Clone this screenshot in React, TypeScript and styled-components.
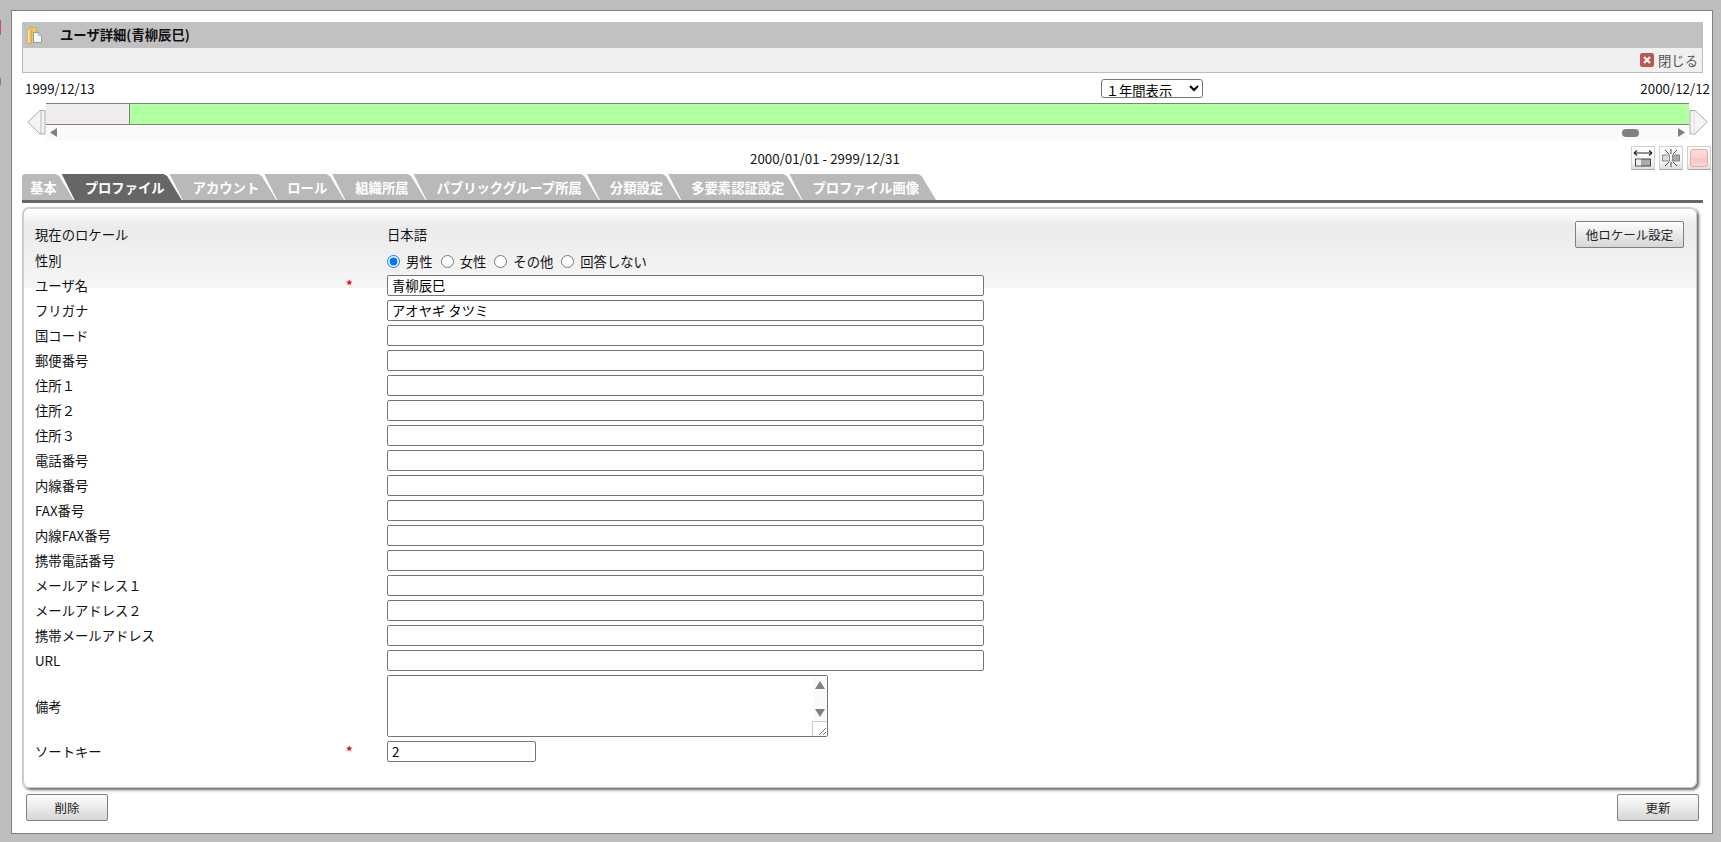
import React from "react";
import styled, { createGlobalStyle } from "styled-components";

const Global = createGlobalStyle`
  html, body { margin: 0; padding: 0; }
  body { font-family: "Noto Sans CJK JP", "Noto Sans", sans-serif; font-size: 13.33px; color: #111; }
  * { box-sizing: border-box; }
`;

const Page = styled.div`
  position: relative;
  width: 1721px;
  height: 842px;
  padding: 10px 8px 8px 11px;
  background: #bdbdbd;
  overflow: hidden;
`;
const EdgeMark = styled.div<{ $top: number; $h: number; $c: string }>`
  position: absolute;
  left: 0;
  top: ${(p) => p.$top}px;
  width: 1px;
  height: ${(p) => p.$h}px;
  background: ${(p) => p.$c};
`;
const Window = styled.div`
  height: 824px;
  padding: 11px 9px 0 10px;
  background: #fff;
  border: 1px solid #808080;
  display: flex;
  flex-direction: column;
`;
const TitleBar = styled.div`
  height: 26px;
  flex: none;
  display: flex;
  align-items: center;
  padding-left: 5px;
  background: #c1c1c1;
`;
const Title = styled.span`
  margin-left: 18px;
  padding-bottom: 2px;
  font-weight: 700;
  font-size: 13.33px;
  color: #111;
`;
const ToolBar = styled.div`
  height: 25px;
  flex: none;
  display: flex;
  align-items: center;
  justify-content: flex-end;
  padding-right: 4px;
  background: #f0f0f0;
  border: 1px solid #bdbdbd;
  border-top: 0;
  color: #555;
`;
const CloseIcon = styled.svg`
  width: 14px;
  height: 14px;
  margin-right: 4px;
`;
const DateRow = styled.div`
  height: 30px;
  flex: none;
  display: flex;
  align-items: center;
  padding-left: 3px;
  margin-right: -7px;
`;
const RangeSelect = styled.select`
  width: 102px;
  height: 19px;
  margin-left: 1006px;
  padding: 0;
  font: 13.33px "Noto Sans CJK JP", "Noto Sans", sans-serif;
  color: #000;
  background: #fff;
  border: 1px solid #767676;
  border-radius: 3px;
`;
const EndDate = styled.span`
  margin-left: auto;
`;
const TimelineRow = styled.div`
  height: 37px;
  flex: none;
  display: flex;
  margin-right: -5px;
  padding-left: 5px;
`;
const Arrow = styled.svg`
  width: 19px;
  height: 25px;
  margin-top: 7px;
  flex: none;
`;
const Track = styled.div`
  width: 1643px;
  flex: none;
`;
const Bar = styled.div`
  height: 22px;
  display: flex;
  border-top: 1px solid #808080;
  border-bottom: 1px solid #808080;
`;
const BarPast = styled.div`
  width: 84px;
  background: #f0ecec;
  border-right: 1px solid #808080;
`;
const BarActive = styled.div`
  flex: 1;
  background: #b0ffa0;
`;
const Strip = styled.div`
  height: 15px;
  display: flex;
  align-items: center;
  padding: 0 4px;
  background: #fafafa;
`;
const Nudge = styled.svg<{ $right?: boolean }>`
  width: 8px;
  height: 9px;
  flex: none;
  margin-left: ${(p) => (p.$right ? "38px" : "0")};
`;
const Knob = styled.div`
  width: 17px;
  height: 8px;
  margin-left: auto;
  border-radius: 4px;
  background: #808080;
`;
const RangeRow = styled.div`
  height: 34px;
  flex: none;
  display: flex;
  align-items: flex-start;
  margin-right: -8px;
  padding-top: 6px;
`;
const RangeText = styled.span`
  margin-left: 728px;
  line-height: 25px;
`;
const ToolGroup = styled.div`
  margin-left: auto;
  display: flex;
  gap: 4px;
`;
const ToolButton = styled.div`
  width: 24px;
  height: 24px;
  background: linear-gradient(#fff, #f4f4f4 70%, #dcdcdc);
  border: 1px solid #d0d0d0;
  border-bottom-color: #aaa;
  border-radius: 1px;
  display: flex;
  align-items: center;
  justify-content: center;
`;
const PinkFace = styled.div`
  width: 18px;
  height: 18px;
  border: 1px solid #e6a8a8;
  border-radius: 3px;
  background: linear-gradient(#fbdcdc, #f9d2d2 50%, #f6c2c2 50%, #f9d6d6);
`;
const TabBar = styled.div`
  height: 29px;
  flex: none;
  display: flex;
  border-bottom: 3px solid #666;
`;
const Tab = styled.div<{ $active?: boolean; $first?: boolean }>`
  height: 26px;
  flex: none;
  margin-right: -15px;
  padding: 0 18px 0 ${(p) => (p.$first ? "8px" : "25px")};
  display: flex;
  align-items: center;
  font-weight: 700;
  font-size: 13.33px;
  color: #fff;
  background: ${(p) => (p.$active ? "#666" : "#b9b9b9")};
  clip-path: polygon(
    ${(p) => (p.$first ? "0 2px, 2px 0" : "2px 0")},
    calc(100% - 19px) 0,
    calc(100% - 15.5px) 2px,
    calc(100% - 1px) 100%,
    ${(p) => (p.$first ? "0 100%" : "15px 100%")}
  );
`;
const Panel = styled.div`
  margin: 4px 6px 0 0;
  padding: 12px 12px 24px 11px;
  height: 581px;
  flex: none;
  border: 1px solid #ccc;
  border-top-width: 2px;
  border-left-width: 2px;
  border-radius: 7px;
  box-shadow: 2px 2px 3px #666;
  background: linear-gradient(#fff 0, #ebebeb 18px, #f6f6f6 78px) no-repeat;
  background-size: 100% 79px;
`;
const LocaleRow = styled.div`
  height: 27px;
  display: flex;
  align-items: center;
`;
const Row = styled.div<{ $h?: number }>`
  height: ${(p) => p.$h ?? 25}px;
  display: flex;
  align-items: center;
`;
const Label = styled.div`
  position: relative;
  width: 352px;
  flex: none;
`;
const Required = styled.span`
  position: absolute;
  left: 311px;
  top: -1px;
  color: #f00;
  font-weight: 700;
  font-size: 13px;
`;
const SideButton = styled.button`
  height: 27px;
  padding: 0;
  font: 12.5px "Noto Sans CJK JP", "Noto Sans", sans-serif;
  color: #222;
  background: linear-gradient(#fdfdfd, #f0f0f0 35%, #d6d6d6);
  border: 1px solid #808080;
  border-radius: 2px;
`;
const LocaleButton = styled(SideButton)`
  width: 109px;
  margin-left: auto;
`;
const RadioItem = styled.label`
  display: flex;
  align-items: center;
  margin-right: 8px;
`;
const Radios = styled.div`
  display: flex;
  padding-top: 2px;
`;
const Radio = styled.input`
  width: 13px;
  height: 13px;
  margin: 0 6px 0 0;
  accent-color: #0075ff;
`;
const TextInput = styled.input<{ $w?: number }>`
  width: ${(p) => p.$w ?? 597}px;
  height: 21px;
  padding: 0 4px;
  font: 13.33px "Noto Sans CJK JP", "Noto Sans", sans-serif;
  color: #000;
  background: #fff;
  border: 1px solid #767676;
  border-radius: 2px;
  outline: none;
`;
const AreaWrap = styled.div`
  position: relative;
  width: 441px;
  height: 62px;
`;
const Area = styled.textarea`
  display: block;
  width: 100%;
  height: 100%;
  padding: 2px 4px;
  resize: none;
  overflow: hidden;
  background: #fff;
  border: 1px solid #767676;
  border-radius: 2px;
  outline: none;
`;
const AreaScroll = styled.div`
  position: absolute;
  top: 1px;
  right: 1px;
  width: 14px;
  height: 45px;
  padding: 5px 0 4px;
  background: #fafafa;
  display: flex;
  flex-direction: column;
  align-items: center;
  justify-content: space-between;
`;
const AreaGrip = styled.svg`
  position: absolute;
  right: 1px;
  bottom: 1px;
  width: 15px;
  height: 15px;
  background: #fff;
  border-top: 1px solid #ccc;
  border-left: 1px solid #ccc;
`;
const ScrollTri = styled.svg`
  width: 10px;
  height: 8px;
`;
const Footer = styled.div`
  margin-top: 6px;
  padding: 0 4px;
  flex: none;
  display: flex;
  justify-content: space-between;
`;
const FootButton = styled(SideButton)`
  width: 82px;
`;

const FolderIcon = () => (
  <svg width="15" height="17" viewBox="0 0 15 17">
    <path d="M0.5 2.5 L2.5 0.5 H9.5 V13 L5 16.5 H0.5 Z" fill="#f0c860" stroke="#c9a04a" strokeWidth="0.7" />
    <path d="M1.5 3 V15.5" stroke="#fbe7a8" strokeWidth="1.4" />
    <path d="M4.5 2.5 V15.5" stroke="#d9a948" strokeWidth="1.2" />
    <path d="M6.5 5.5 H11.5 L14.5 8.5 V15.5 H6.5 Z" fill="#f4fafa" stroke="#7f9aa0" strokeWidth="0.9" />
    <path d="M11.5 5.5 V8.5 H14.5" fill="#cfe0e2" stroke="#7f9aa0" strokeWidth="0.6" />
  </svg>
);

const fields: { label: string; value?: string; required?: boolean }[] = [
  { label: "ユーザ名", value: "青柳辰巳", required: true },
  { label: "フリガナ", value: "アオヤギ タツミ" },
  { label: "国コード" },
  { label: "郵便番号" },
  { label: "住所１" },
  { label: "住所２" },
  { label: "住所３" },
  { label: "電話番号" },
  { label: "内線番号" },
  { label: "FAX番号" },
  { label: "内線FAX番号" },
  { label: "携帯電話番号" },
  { label: "メールアドレス１" },
  { label: "メールアドレス２" },
  { label: "携帯メールアドレス" },
  { label: "URL" },
];
const tabs = ["基本", "プロファイル", "アカウント", "ロール", "組織所属", "パブリックグループ所属", "分類設定", "多要素認証設定", "プロファイル画像"];
const genders = ["男性", "女性", "その他", "回答しない"];

export default function App() {
  return (
    <Page>
      <Global />
      <EdgeMark $top={20} $h={15} $c="#c9545c" />
      <EdgeMark $top={78} $h={7} $c="#4f8fc0" />
      <Window>
        <TitleBar>
          <FolderIcon />
          <Title>ユーザ詳細(青柳辰巳)</Title>
        </TitleBar>
        <ToolBar>
          <CloseIcon viewBox="0 0 14 14">
            <rect x="0.5" y="0.5" width="13" height="13" rx="1.5" fill="#c4534f" stroke="#a8605c" />
            <path d="M4 4 L10 10 M10 4 L4 10" stroke="#fff" strokeWidth="2.2" />
          </CloseIcon>
          閉じる
        </ToolBar>
        <DateRow>
          <span>1999/12/13</span>
          <RangeSelect defaultValue="1">
            <option value="1">１年間表示</option>
          </RangeSelect>
          <EndDate>2000/12/12</EndDate>
        </DateRow>
        <TimelineRow>
          <Arrow viewBox="0 0 19 25">
            <path d="M18 0.5 V24 H13 L0.8 12 L13 0.5 Z" fill="#f4f4f4" stroke="#999" strokeWidth="0.8" />
            <path d="M14 1 V24" stroke="#bbb" />
          </Arrow>
          <Track>
            <Bar>
              <BarPast />
              <BarActive />
            </Bar>
            <Strip>
              <Nudge viewBox="0 0 8 9">
                <path d="M0 4.5 L7 0 V9 Z" fill="#808080" />
              </Nudge>
              <Knob />
              <Nudge $right viewBox="0 0 8 9">
                <path d="M8 4.5 L1 0 V9 Z" fill="#808080" />
              </Nudge>
            </Strip>
          </Track>
          <Arrow viewBox="0 0 19 25">
            <path d="M1 0.5 V24 H6 L18.2 12 L6 0.5 Z" fill="#f4f4f4" stroke="#999" strokeWidth="0.8" />
            <path d="M5 1 V24" stroke="#ddd" />
          </Arrow>
        </TimelineRow>
        <RangeRow>
          <RangeText>2000/01/01 - 2999/12/31</RangeText>
          <ToolGroup>
            <ToolButton>
              <svg width="20" height="20" viewBox="0 0 20 20">
                <path d="M1 5 H19 M1 5 L4 2.5 M1 5 L4 7.5 M19 5 L16 2.5 M19 5 L16 7.5" stroke="#222" strokeWidth="1.1" fill="none" />
                <rect x="2.5" y="11" width="15" height="7" fill="#aaa" stroke="#222" strokeWidth="0.8" />
                <rect x="3" y="11.5" width="5" height="6" fill="#eee" />
              </svg>
            </ToolButton>
            <ToolButton>
              <svg width="20" height="20" viewBox="0 0 20 20">
                <path d="M10 1 V6 M4 2 L8 6 M16 2 L12 6 M10 14 V19 M4 18 L8 14 M16 18 L12 14" stroke="#333" strokeWidth="0.9" fill="none" />
                <rect x="1.5" y="7" width="7" height="6" fill="#ddd" stroke="#777" strokeWidth="0.8" />
                <rect x="11.5" y="7" width="7" height="6" fill="#aaa" stroke="#777" strokeWidth="0.8" />
              </svg>
            </ToolButton>
            <ToolButton>
              <PinkFace />
            </ToolButton>
          </ToolGroup>
        </RangeRow>
        <TabBar>
          {tabs.map((t, i) => (
            <Tab key={t} $first={i === 0} $active={i === 1}>
              {t}
            </Tab>
          ))}
        </TabBar>
        <Panel>
          <LocaleRow>
            <Label>現在のロケール</Label>
            <span>日本語</span>
            <LocaleButton>他ロケール設定</LocaleButton>
          </LocaleRow>
          <Row>
            <Label>性別</Label>
            <Radios>
              {genders.map((g, i) => (
                <RadioItem key={g}>
                  <Radio type="radio" name="gender" defaultChecked={i === 0} />
                  {g}
                </RadioItem>
              ))}
            </Radios>
          </Row>
          {fields.map((f) => (
            <Row key={f.label}>
              <Label>
                {f.label}
                {f.required && <Required>*</Required>}
              </Label>
              <TextInput defaultValue={f.value ?? ""} />
            </Row>
          ))}
          <Row $h={66}>
            <Label>備考</Label>
            <AreaWrap>
              <Area />
              <AreaScroll>
                <ScrollTri viewBox="0 0 10 8">
                  <path d="M5 0 L10 8 H0 Z" fill="#808080" />
                </ScrollTri>
                <ScrollTri viewBox="0 0 10 8">
                  <path d="M5 8 L10 0 H0 Z" fill="#808080" />
                </ScrollTri>
              </AreaScroll>
              <AreaGrip viewBox="0 0 14 14">
                <path d="M13 6 L6 13 M13 10 L10 13" stroke="#555" strokeWidth="0.8" />
              </AreaGrip>
            </AreaWrap>
          </Row>
          <Row>
            <Label>
              ソートキー
              <Required>*</Required>
            </Label>
            <TextInput $w={149} defaultValue="2" />
          </Row>
        </Panel>
        <Footer>
          <FootButton>削除</FootButton>
          <FootButton>更新</FootButton>
        </Footer>
      </Window>
    </Page>
  );
}
